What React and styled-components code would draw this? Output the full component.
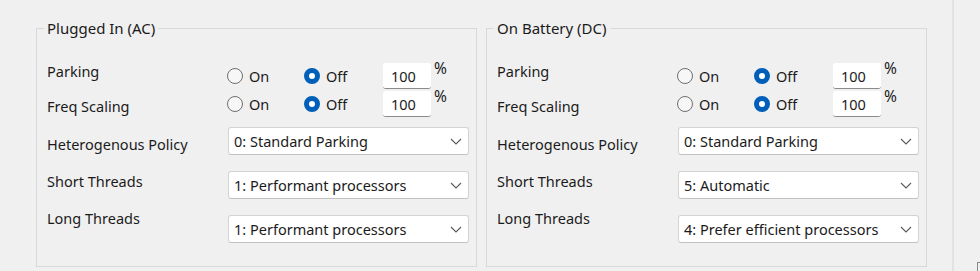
import styled, { createGlobalStyle } from "styled-components";

const GlobalStyle = createGlobalStyle`
    body {
        margin: 0;
        background-color: #f0f0f0;
        font-family: "Noto Sans", "DejaVu Sans", sans-serif;
        font-size: 14.5px;
        color: #1b1b1b;
    }
`;

const groups = [
    {
        title: "Plugged In (AC)",
        hetero: "0: Standard Parking",
        short: "1: Performant processors",
        long: "1: Performant processors",
    },
    {
        title: "On Battery (DC)",
        hetero: "0: Standard Parking",
        short: "5: Automatic",
        long: "4: Prefer efficient processors",
    },
];

function Chevron() {
    return (
        <svg width="12" height="7" viewBox="0 0 12 7">
            <path d="M1 1 L6 6 L11 1" fill="none" stroke="#5a5a5a" strokeWidth="1.1" />
        </svg>
    );
}

function Toggle() {
    return (
        <ControlCell>
            <Radio $w={77}>
                <RadioDot />
                On
            </Radio>
            <Radio $w={79}>
                <RadioDot $checked />
                Off
            </Radio>
            <NumberBox>100</NumberBox>
            <Percent>%</Percent>
        </ControlCell>
    );
}

function Select({ value }) {
    return (
        <SelectBox>
            <span>{value}</span>
            <Chevron />
        </SelectBox>
    );
}

function Group({ g }) {
    return (
        <GroupBox>
            <Legend>{g.title}</Legend>
            <Row $top={24} $h={27}>
                <Label $shift={-1}>Parking</Label>
                <Toggle />
            </Row>
            <Row $top={1} $h={27}>
                <Label $shift={6}>Freq Scaling</Label>
                <Toggle />
            </Row>
            <Row $top={10} $h={28}>
                <Label $shift={7}>Heterogenous Policy</Label>
                <Select value={g.hetero} />
            </Row>
            <Row $top={16} $h={28}>
                <Label $shift={0}>Short Threads</Label>
                <Select value={g.short} />
            </Row>
            <Row $top={16} $h={28}>
                <Label $shift={-7}>Long Threads</Label>
                <Select value={g.long} />
            </Row>
        </GroupBox>
    );
}

export default function App() {
    return (
        <Page>
            <GlobalStyle />
            {groups.map(g => <Group key={g.title} g={g} />)}
            <Separator />
            <Corner />
        </Page>
    );
}

const Page = styled.div`
    display: flex;
    align-items: flex-start;
    height: 271px;
    padding-left: 36px;
    gap: 9px;
    overflow: hidden;
    position: relative;
`;

const GroupBox = styled.fieldset`
    box-sizing: border-box;
    margin: 18px 0 0 0;
    width: 441px;
    height: 249px;
    padding: 0 0 0 7px;
    border: 1px solid #d9d9d9;
    display: flex;
    flex-direction: column;
`;

const Legend = styled.legend`
    padding: 0 3px;
    line-height: 20px;
    font-size: 15px;
`;

const Row = styled.div`
    display: grid;
    grid-template-columns: 181px 242px;
    margin-top: ${p => p.$top}px;
    height: ${p => p.$h}px;
    padding-left: 3px;
`;

const Label = styled.div`
    line-height: 20px;
    margin-top: ${p => p.$shift}px;
    white-space: nowrap;
`;

const ControlCell = styled.div`
    display: flex;
    align-items: center;
    margin-left: -1px;
`;

const Radio = styled.label`
    display: flex;
    align-items: center;
    gap: 6px;
    width: ${p => p.$w}px;
    height: 100%;
`;

const RadioDot = styled.span`
    box-sizing: border-box;
    flex: none;
    width: 16px;
    height: 16px;
    border-radius: 50%;
    border: ${p => p.$checked ? "5px solid #005fb8" : "1px solid #6e6e6e"};
    background: ${p => p.$checked ? "#ffffff" : "#f7f7f7"};
`;

const NumberBox = styled.div`
    box-sizing: border-box;
    width: 48px;
    height: 26px;
    background: #ffffff;
    border-radius: 3px;
    border-bottom: 1px solid #8a8a8a;
    padding: 3px 0 0 8px;
    line-height: 20px;
`;

const Percent = styled.span`
    align-self: flex-start;
    margin: -4px 0 0 3px;
    line-height: 20px;
    font-size: 15.5px;
`;

const SelectBox = styled.div`
    box-sizing: border-box;
    width: 241px;
    height: 28px;
    display: flex;
    align-items: center;
    justify-content: space-between;
    padding: 0 6px 0 5px;
    background: #ffffff;
    border: 1px solid #d3d3d3;
    border-bottom-color: #c2c2c2;
    border-radius: 3px;
    white-space: nowrap;
`;

const Separator = styled.div`
    align-self: stretch;
    width: 2px;
    margin-left: 16px;
    background: #e2e2e2;
`;

const Corner = styled.div`
    position: absolute;
    left: 977px;
    top: 262px;
    width: 8px;
    height: 12px;
    border-left: 1px solid #8a8a8a;
    border-top: 1px solid #8a8a8a;
`;
